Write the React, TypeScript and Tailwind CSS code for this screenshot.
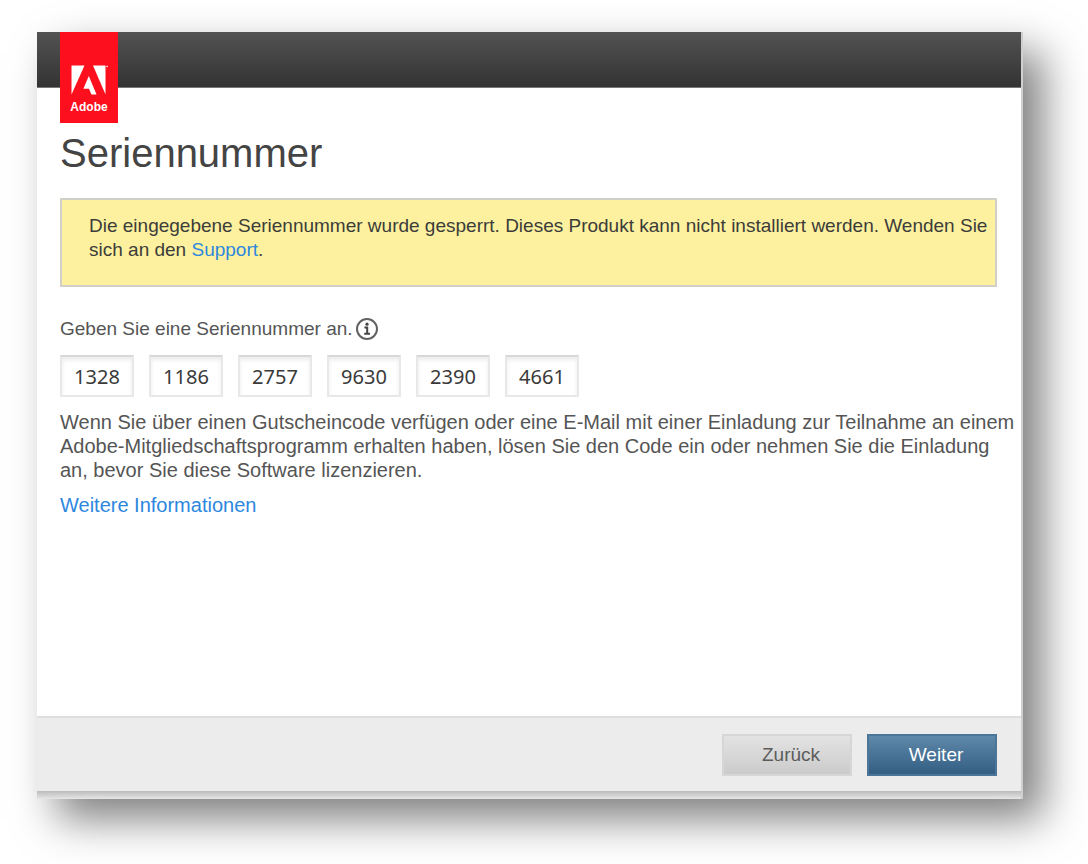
const serialParts = ["1328", "1186", "2757", "9630", "2390", "4661"];

function AdobeLogo() {
  return (
    <div className="flex h-[91px] w-[58px] flex-col items-center bg-[#fd0f1d] pt-[33px] text-white">
      <svg viewBox="0 0 38 30" className="h-[30px] w-[38px] shrink-0" fill="currentColor" aria-hidden="true">
        <path d="M1.5 0.5H14.5L1.5 29.5Z" />
        <path d="M23 0.5H35.5V29.5Z" />
        <path d="M18.8 11L26.5 29.5H21.4L19 23.8H13.4Z" />
        <rect x="36.4" y="0.8" width="1.4" height="1.4" />
      </svg>
      <span className="mt-1 text-xs leading-4 font-bold">Adobe</span>
    </div>
  );
}

function InfoIcon() {
  return (
    <svg viewBox="0 0 24 24" className="h-6 w-6" fill="none" stroke="#626262" aria-hidden="true">
      <circle cx="12" cy="12" r="10" strokeWidth="2" />
      <circle cx="12" cy="7.2" r="1.6" fill="#444" stroke="none" />
      <path d="M9.4 10.5H12.2V16.8M9.2 16.8H15" stroke="#444" strokeWidth="2" />
    </svg>
  );
}

export default function App() {
  return (
    <div className="flex min-h-screen bg-white pt-8 pr-[65px] pb-[65px] pl-[37px] font-['Liberation_Sans',Arial,sans-serif]">
      <main className="flex min-w-0 flex-1 flex-col border-r-2 border-[#cfcfcf] bg-white shadow-[20px_20px_40px_rgba(0,0,0,0.5)]">
        <header className="h-14 border-b border-[#777] bg-linear-to-b from-[#535353] to-[#333] pl-[23px]">
          <AdobeLogo />
        </header>

        <div className="flex-1 pt-[41px] pr-6 pl-[23px] text-[19px] leading-6 text-[#555]">
          <h1 className="text-[40px] leading-12 text-[#444]">Seriennummer</h1>

          <div
            role="alert"
            className="mt-[21px] h-[89px] border-2 border-[#d0cfc8] bg-[#fdf19f] pt-[14px] pl-[27px] text-[#3c3c3a]"
          >
            Die eingegebene Seriennummer wurde gesperrt. Dieses Produkt kann nicht installiert werden. Wenden Sie
            sich an den{" "}
            <a href="#support" className="text-[#2d87de]">
              Support
            </a>
            .
          </div>

          <form>
            <div className="mt-[30px] flex items-center gap-0.5">
              <span id="serial-label">Geben Sie eine Seriennummer an.</span>
              <button type="button" aria-label="Info">
                <InfoIcon />
              </button>
            </div>
            <div role="group" aria-labelledby="serial-label" className="mt-[14px] flex gap-[15px]">
              {serialParts.map((part, i) => (
                <input
                  key={part}
                  aria-label={`Seriennummer Teil ${i + 1}`}
                  defaultValue={part}
                  maxLength={4}
                  className="h-[42px] w-[74px] border-2 border-[#e8e8e8] border-t-[#d8d8d8] bg-white text-center font-['Noto_Sans','Open_Sans',sans-serif] text-xl text-[#3a3a3a] shadow-[inset_0_3px_4px_rgba(0,0,0,0.08)]"
                />
              ))}
            </div>
          </form>

          <p className="mt-[13px] -mr-5 text-xl leading-6">
            Wenn Sie über einen Gutscheincode verfügen oder eine E-Mail mit einer Einladung zur Teilnahme an einem
            Adobe-Mitgliedschaftsprogramm erhalten haben, lösen Sie den Code ein oder nehmen Sie die Einladung
            an, bevor Sie diese Software lizenzieren.
          </p>
          <a href="#info" className="mt-[11px] inline-block text-xl leading-6 text-[#2d87de]">
            Weitere Informationen
          </a>
        </div>

        <footer className="flex h-[75px] justify-end gap-[15px] border-t-2 border-[#dedede] bg-[#ececec] pt-4 pr-6 text-[19px]">
          <button
            type="button"
            className="h-[42px] w-[130px] border-2 border-[#d6d6d6] bg-linear-to-b from-[#e3e3e3] to-[#cbcbcb] pl-2 text-[#5c5c5c]"
          >
            Zurück
          </button>
          <button
            type="button"
            className="h-[42px] w-[130px] border-2 border-[#4c7698] bg-linear-to-b from-[#5f88a9] to-[#335f84] pl-2 text-white"
          >
            Weiter
          </button>
        </footer>
        <div className="h-2 bg-linear-to-b from-[#bcbcbc] to-[#e6e6e6]" />
      </main>
    </div>
  );
}
